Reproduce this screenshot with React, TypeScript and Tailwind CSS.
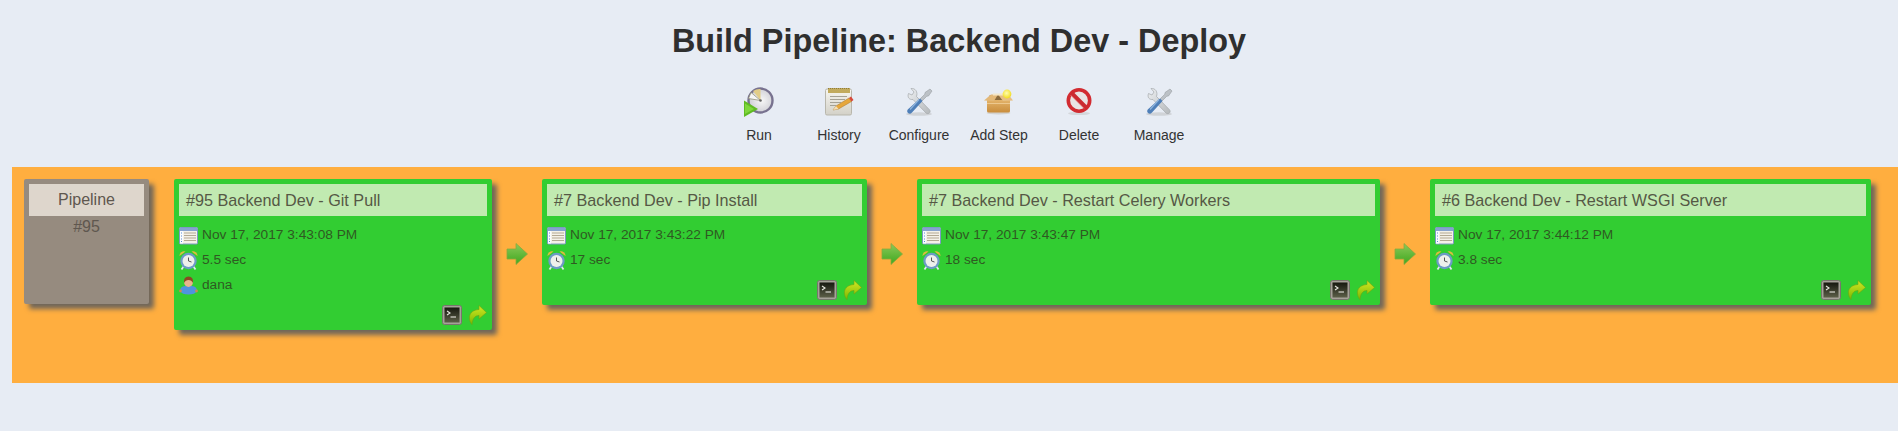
import React from "react";

function ClockRunIcon() {
  return (
    <svg width="32" height="32" viewBox="0 0 32 32">
      <defs>
        <radialGradient id="runFace" cx="0.55" cy="0.5" r="0.6">
          <stop offset="0" stopColor="#f7f7f7" />
          <stop offset="1" stopColor="#c9c9d0" />
        </radialGradient>
      </defs>
      <circle cx="17.5" cy="14.5" r="12" fill="url(#runFace)" stroke="#78728f" strokeWidth="2.4" />
      <path d="M17.5 14.5 L10 5 A12 12 0 0 1 17.5 3 Z" fill="#e2cd88" />
      <path d="M17.5 14.5 L8 6.5 L5.5 12.5 Z" fill="#f6f6f6" stroke="#8a8a6a" strokeWidth="0.7" />
      <circle cx="17.5" cy="14.5" r="1.3" fill="#666" />
      <path d="M1 14.5 L15 23 L1 31 Z" fill="#5fbb22" />
      <path d="M2 17.5 L11 23 L2 28 Z" fill="#7fd73c" />
    </svg>
  );
}

function NotepadIcon() {
  return (
    <svg width="32" height="32" viewBox="0 0 32 32">
      <defs>
        <linearGradient id="padBody" x1="0" y1="0" x2="0" y2="1">
          <stop offset="0" stopColor="#f7f6f0" />
          <stop offset="1" stopColor="#d3d1c8" />
        </linearGradient>
      </defs>
      <rect x="2.5" y="3" width="26" height="26" rx="1.5" fill="url(#padBody)" stroke="#b9b7ac" />
      <rect x="5" y="2" width="22" height="5" fill="#c2ab5e" />
      <path d="M5 2.5h22" stroke="#8f7c3c" strokeDasharray="1 1" />
      <path d="M7 10.5h17M7 13.5h15M7 16.5h11M7 19.5h6" stroke="#a5a295" strokeWidth="1" />
      <path d="M10 24 L13 20 L26 12 L28.5 15.5 L15.5 23 Z" fill="#e6a73c" stroke="#a8752a" strokeWidth="0.5" />
      <path d="M26 12 L28.5 15.5 L30.5 14 L28 10.5 Z" fill="#d8483a" />
      <path d="M10 24 L13 20 L15.5 23 Z" fill="#f2dfb8" />
    </svg>
  );
}

function ToolsIcon() {
  return (
    <svg width="32" height="32" viewBox="0 0 32 32">
      <defs>
        <linearGradient id="toolSteel" x1="0" y1="0" x2="1" y2="1">
          <stop offset="0" stopColor="#eef0f2" />
          <stop offset="1" stopColor="#b4b8bb" />
        </linearGradient>
      </defs>
      <ellipse cx="16" cy="28" rx="13" ry="1.8" fill="#d0d3d7" />
      <path d="M8 2.5 L11 6 L9 9 L5.5 7.5 C4 11.5 6.5 14 10 13.5 L23 27 C25.5 29 28.5 26 26.5 23.8 L13.5 10.5 C15 6 12.5 2 8 2.5 Z" fill="url(#toolSteel)" stroke="#a3a7ab" strokeWidth="0.7" />
      <path d="M27 3 L29 5 L25.5 10 L23.8 10.2 L17 17 L15 15 L21.8 8.2 L22 6.5 Z" fill="#bcc1c6" stroke="#8f9498" strokeWidth="0.5" />
      <path d="M17 12.5 L19.5 15 L9 26.5 C6.5 29.5 2.5 26 5 23.2 Z" fill="#4f7fb8" />
      <path d="M16 13.5 L7 23.5" stroke="#8fb4dc" strokeWidth="1.2" />
    </svg>
  );
}

function BoxIcon() {
  return (
    <svg width="32" height="32" viewBox="0 0 32 32">
      <defs>
        <linearGradient id="boxFront" x1="0" y1="0" x2="0" y2="1">
          <stop offset="0" stopColor="#e3b36a" />
          <stop offset="1" stopColor="#c98d3c" />
        </linearGradient>
        <radialGradient id="boxBulb" cx="0.45" cy="0.4" r="0.6">
          <stop offset="0" stopColor="#fffdb0" />
          <stop offset="1" stopColor="#f2dd1e" />
        </radialGradient>
      </defs>
      <ellipse cx="15.5" cy="27" rx="12" ry="1.4" fill="#d3d2cf" />
      <path d="M4 14 H27 V25 Q27 26.5 25.5 26.5 H5.5 Q4 26.5 4 25 Z" fill="url(#boxFront)" />
      <path d="M7 9 H25 L27 14 H4 Z" fill="#8a6a3c" />
      <path d="M1 14.5 L8 8.5 L15 8.5 L11 15 Z" fill="#e3b878" />
      <path d="M30 14.5 L25 8 L15 8.5 L20 15 Z" fill="#e7c083" />
      <rect x="10" y="7.5" width="10" height="2" fill="#f3e6c8" />
      <path d="M4 17.5 H27" stroke="#edc88e" />
      <circle cx="24" cy="8" r="4.4" fill="url(#boxBulb)" />
    </svg>
  );
}

function NoEntryIcon() {
  return (
    <svg width="32" height="32" viewBox="0 0 32 32">
      <ellipse cx="16" cy="27.5" rx="11" ry="1.6" fill="#d4d7db" />
      <circle cx="16" cy="14.5" r="10.7" fill="#e9e4e4" stroke="#d22b31" strokeWidth="3.6" />
      <path d="M8.5 7 L23.5 22" stroke="#cb2b31" strokeWidth="4" />
      <path d="M7.5 9 L21 22.5" stroke="#ef8f8f" strokeWidth="0.6" />
    </svg>
  );
}

function TableIcon() {
  return (
    <svg width="19" height="18" viewBox="0 0 19 18">
      <rect x="0.5" y="0.5" width="18" height="16.5" rx="1" fill="#f4f1e8" stroke="#7d99c4" />
      <rect x="1" y="1" width="17" height="3" fill="#86a3cf" />
      <rect x="1" y="4" width="3" height="12.5" fill="#fafcff" />
      <path d="M2 6h1M2 9h1M2 12h1M2 14.5h1" stroke="#5a8cd0" />
      <path d="M5 6h12M5 8.5h12M5 11h12M5 13.5h12" stroke="#b3a993" />
    </svg>
  );
}

function AlarmIcon() {
  return (
    <svg width="19" height="19" viewBox="0 0 19 19">
      <path d="M0.5 5 A4.5 4.5 0 0 1 6.5 0.5 Z" fill="#e0bc3e" />
      <path d="M18.5 5 A4.5 4.5 0 0 0 12.5 0.5 Z" fill="#e0bc3e" />
      <path d="M4.5 15.5 L2.5 18.5 M14.5 15.5 L16.5 18.5" stroke="#dfe8f0" strokeWidth="1.8" />
      <circle cx="9.5" cy="10" r="8.2" fill="#6d9ac6" />
      <circle cx="9.5" cy="10" r="6" fill="#eef0ec" />
      <path d="M9.5 6.5 V10 L12.5 11" fill="none" stroke="#555" strokeWidth="1" />
    </svg>
  );
}

function UserIcon() {
  return (
    <svg width="19" height="19" viewBox="0 0 19 19">
      <path d="M1 15 Q1 10.5 6 10 H13 Q18 10.5 18 15 Q16 18.5 9.5 18.5 Q3 18.5 1 15 Z" fill="#4f94de" />
      <circle cx="1.5" cy="15" r="1.4" fill="#c98a54" />
      <circle cx="17.5" cy="15" r="1.4" fill="#c98a54" />
      <circle cx="9.5" cy="6.5" r="4.4" fill="#e9b48c" />
      <path d="M5 7 Q4.3 0.5 9.5 0.5 Q14.7 0.5 14 7 Q12.5 4 9.5 4 Q6.5 4 5 7 Z" fill="#8a4a22" />
    </svg>
  );
}

function TerminalIcon() {
  return (
    <svg width="20" height="20" viewBox="0 0 20 20">
      <defs>
        <linearGradient id="termScreen" x1="0" y1="0" x2="0" y2="1">
          <stop offset="0" stopColor="#16180f" />
          <stop offset="1" stopColor="#5c5f48" />
        </linearGradient>
      </defs>
      <rect x="0.5" y="0.5" width="19" height="19" rx="2" fill="#a5a298" stroke="#77756c" />
      <rect x="2.5" y="2.5" width="15" height="15" fill="url(#termScreen)" />
      <path d="M5 6 L8 8 L5 10" fill="none" stroke="#e8e8e0" strokeWidth="1.1" />
      <path d="M8.5 12 H14" stroke="#e8e8e0" strokeWidth="1.1" />
    </svg>
  );
}

function RedoIcon() {
  return (
    <svg width="19" height="20" viewBox="0 0 19 20">
      <defs>
        <linearGradient id="redoFill" x1="0" y1="0" x2="0" y2="1">
          <stop offset="0" stopColor="#d2e824" />
          <stop offset="1" stopColor="#7cb800" />
        </linearGradient>
      </defs>
      <path d="M11 0.5 L18.5 7.5 L11 14 V10.5 C7 10.5 4.5 13.5 4 19.5 C0 15 -0.5 5.5 11 4.5 Z" fill="url(#redoFill)" stroke="#6fa510" strokeWidth="0.6" />
    </svg>
  );
}

function NextArrow() {
  return (
    <svg width="22" height="22" viewBox="0 0 22 22">
      <defs>
        <linearGradient id="nextFill" x1="0" y1="0" x2="0" y2="1">
          <stop offset="0" stopColor="#8cc95a" />
          <stop offset="1" stopColor="#3ea81e" />
        </linearGradient>
      </defs>
      <path d="M1 6 H10 V0.5 L21.5 11 L10 21.5 V16 H1 Z" fill="url(#nextFill)" stroke="#8aa83c" strokeWidth="0.8" />
    </svg>
  );
}

const toolbar = [
  { label: "Run", icon: <ClockRunIcon /> },
  { label: "History", icon: <NotepadIcon /> },
  { label: "Configure", icon: <ToolsIcon /> },
  { label: "Add Step", icon: <BoxIcon /> },
  { label: "Delete", icon: <NoEntryIcon /> },
  { label: "Manage", icon: <ToolsIcon /> },
];

const steps = [
  { title: "#95 Backend Dev - Git Pull", date: "Nov 17, 2017 3:43:08 PM", time: "5.5 sec", user: "dana", width: "w-[318px]" },
  { title: "#7 Backend Dev - Pip Install", date: "Nov 17, 2017 3:43:22 PM", time: "17 sec", width: "w-[325px]" },
  { title: "#7 Backend Dev - Restart Celery Workers", date: "Nov 17, 2017 3:43:47 PM", time: "18 sec", width: "w-[463px]" },
  { title: "#6 Backend Dev - Restart WSGI Server", date: "Nov 17, 2017 3:44:12 PM", time: "3.8 sec", width: "w-[441px]" },
];

function InfoRow({ icon, text }: { icon: React.ReactNode; text: string }) {
  return (
    <div className="flex h-[25px] items-center gap-[4px]">
      <span className="flex w-[19px] shrink-0 justify-center">{icon}</span>
      <span>{text}</span>
    </div>
  );
}

export default function App() {
  return (
    <div className="h-[431px] overflow-hidden bg-[#e7ecf4] font-['Liberation_Sans',Arial,sans-serif] text-[#333]">
      <div className="pl-[20px]">
        <h1 className="pt-[21px] text-center text-[32.4px] leading-[40px] font-bold text-[#2f2f2f]">
          Build Pipeline: Backend Dev - Deploy
        </h1>

        <div className="mt-[25px] flex justify-center">
          {toolbar.map((item) => (
            <div key={item.label} className="flex w-[80px] flex-col items-center">
              <div className="h-[32px]">{item.icon}</div>
              <div className="mt-[9px] text-[14px] leading-[16px]">{item.label}</div>
            </div>
          ))}
        </div>
      </div>

      <div className="mt-[24px] ml-[12px] flex h-[216px] items-start bg-[#ffae3f] p-[12px]">
        <div className="mr-[25px] h-[125px] w-[125px] shrink-0 rounded-[2px] border-[5px] border-[#968b7f] bg-[#968b7f] text-center text-[16px] text-[#5f574f] shadow-[5px_5px_5px_#70665a]">
          <div className="h-[32px] bg-[#ded6cc] leading-[32px]">Pipeline</div>
          <div className="pt-[2px] leading-[18px]">#95</div>
        </div>

        {steps.map((step, i) => (
          <React.Fragment key={step.title}>
            {i > 0 && (
              <div className="flex h-[150px] w-[50px] shrink-0 items-center justify-center">
                <NextArrow />
              </div>
            )}
            <div className={`${step.width} shrink-0 rounded-[2px] border-[5px] border-[#32cd32] bg-[#32cd32] text-[13.7px] text-[#2f5a22] shadow-[5px_5px_5px_#70665a]`}>
              <div className="h-[32px] bg-[#c1eab1] pl-[7px] text-[16.2px] leading-[32px] text-[#555845]">{step.title}</div>
              <div className="pt-[7px]">
                <InfoRow icon={<TableIcon />} text={step.date} />
                <InfoRow icon={<AlarmIcon />} text={step.time} />
                {step.user && <InfoRow icon={<UserIcon />} text={step.user} />}
              </div>
              <div className="flex h-[27px] items-end justify-end gap-[6px]">
                <TerminalIcon />
                <RedoIcon />
              </div>
            </div>
          </React.Fragment>
        ))}
      </div>
    </div>
  );
}
